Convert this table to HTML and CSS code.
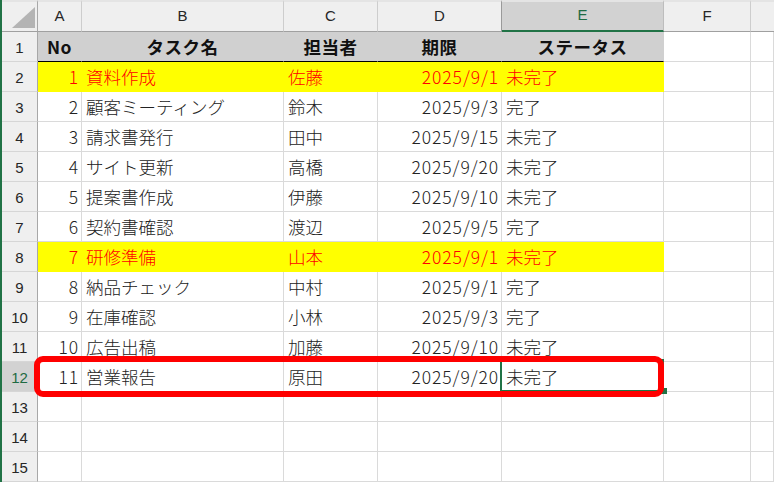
FILE: index.html
```html
<!DOCTYPE html>
<html lang="ja">
<head>
<meta charset="utf-8">
<title>タスク一覧</title>
<link rel="stylesheet" href="styles.css">
</head>
<body>
<div class="app">
  <div class="stripe"></div>
  <div class="sheet">
    <div class="corner"><svg class="tri" width="23" height="21" viewBox="0 0 23 21"><polygon points="0,21 23,21 23,0" fill="#b4b4b4"/></svg></div>
    <div class="ch">A</div><div class="ch">B</div><div class="ch">C</div><div class="ch pre">D</div><div class="ch sel">E</div><div class="ch">F</div><div class="ch last"></div>

    <div class="rh">1</div>
    <div class="c hd">No</div><div class="c hd">タスク名</div><div class="c hd">担当者</div><div class="c hd">期限</div><div class="c hd">ステータス</div><div class="c"></div><div class="c"></div>

    <div class="rh">2</div>
    <div class="c yl num">1</div><div class="c yl">資料作成</div><div class="c yl">佐藤</div><div class="c yl num">2025/9/1</div><div class="c yl">未完了</div><div class="c"></div><div class="c"></div>

    <div class="rh">3</div>
    <div class="c num">2</div><div class="c">顧客ミーティング</div><div class="c">鈴木</div><div class="c num">2025/9/3</div><div class="c">完了</div><div class="c"></div><div class="c"></div>

    <div class="rh">4</div>
    <div class="c num">3</div><div class="c">請求書発行</div><div class="c">田中</div><div class="c num">2025/9/15</div><div class="c">未完了</div><div class="c"></div><div class="c"></div>

    <div class="rh">5</div>
    <div class="c num">4</div><div class="c">サイト更新</div><div class="c">高橋</div><div class="c num">2025/9/20</div><div class="c">未完了</div><div class="c"></div><div class="c"></div>

    <div class="rh">6</div>
    <div class="c num">5</div><div class="c">提案書作成</div><div class="c">伊藤</div><div class="c num">2025/9/10</div><div class="c">未完了</div><div class="c"></div><div class="c"></div>

    <div class="rh">7</div>
    <div class="c num">6</div><div class="c">契約書確認</div><div class="c">渡辺</div><div class="c num">2025/9/5</div><div class="c">完了</div><div class="c"></div><div class="c"></div>

    <div class="rh">8</div>
    <div class="c yl num">7</div><div class="c yl">研修準備</div><div class="c yl">山本</div><div class="c yl num">2025/9/1</div><div class="c yl">未完了</div><div class="c"></div><div class="c"></div>

    <div class="rh">9</div>
    <div class="c num">8</div><div class="c">納品チェック</div><div class="c">中村</div><div class="c num">2025/9/1</div><div class="c">完了</div><div class="c"></div><div class="c"></div>

    <div class="rh">10</div>
    <div class="c num">9</div><div class="c">在庫確認</div><div class="c">小林</div><div class="c num">2025/9/3</div><div class="c">完了</div><div class="c"></div><div class="c"></div>

    <div class="rh">11</div>
    <div class="c num">10</div><div class="c">広告出稿</div><div class="c">加藤</div><div class="c num">2025/9/10</div><div class="c">未完了</div><div class="c"></div><div class="c"></div>

    <div class="rh sel">12</div>
    <div class="c num">11</div><div class="c">営業報告</div><div class="c">原田</div><div class="c num">2025/9/20</div><div class="c">未完了</div><div class="c"></div><div class="c"></div>

    <div class="rh">13</div>
    <div class="c"></div><div class="c"></div><div class="c"></div><div class="c"></div><div class="c"></div><div class="c"></div><div class="c"></div>

    <div class="rh">14</div>
    <div class="c"></div><div class="c"></div><div class="c"></div><div class="c"></div><div class="c"></div><div class="c"></div><div class="c"></div>

    <div class="rh">15</div>
    <div class="c"></div><div class="c"></div><div class="c"></div><div class="c"></div><div class="c"></div><div class="c"></div><div class="c"></div>

    <div class="selection"></div>
    <div class="handle"></div>
    <div class="highlight"></div>
  </div>
</div>
</body>
</html>
```

FILE: styles.css
```css
* { box-sizing: border-box; }
html, body { margin: 0; padding: 0; background: #ffffff; }
body { width: 774px; height: 482px; overflow: hidden; }

.app {
  display: flex;
  height: 482px;
}
.stripe {
  width: 2px;
  flex: none;
  background: #217346;
}
.sheet {
  position: relative;
  flex: 1;
  display: grid;
  grid-template-columns: 36px 44px 202px 94px 124px 162px 87px 1fr;
  grid-template-rows: 32px repeat(15, 30px);
  font-family: "Noto Sans CJK JP", "Noto Sans", sans-serif;
  color: #222222;
}

.corner {
  position: relative;
  background: #efefef;
  border-top: 2px solid #e4e4e4;
  border-right: 1px solid #a8a8a8;
  border-bottom: 1px solid #a0a0a0;
}
.tri { position: absolute; left: 10px; top: 5px; }

.ch {
  display: flex;
  justify-content: center;
  align-items: center;
  padding-bottom: 3px;
  background: #efefef;
  border-top: 2px solid #e4e4e4;
  border-right: 1px solid #cdcdcd;
  border-bottom: 1px solid #a0a0a0;
  font-family: "Liberation Sans", "Noto Sans", sans-serif;
  font-size: 15px;
  color: #262626;
}
.ch.pre { border-right-color: #9a9a9a; }
.ch.sel {
  background: #d2d2d2;
  color: #1e6b43;
  border-bottom: 2px solid #217346;
  border-right-color: #bdbdbd;
}
.ch.last { border-right: none; }

.rh {
  display: flex;
  justify-content: center;
  align-items: center;
  padding-top: 1px;
  background: #efefef;
  border-right: 1px solid #a8a8a8;
  border-bottom: 1px solid #d6d6d6;
  font-family: "Liberation Sans", "Noto Sans", sans-serif;
  font-size: 15px;
  color: #262626;
}
.rh.sel {
  background: #d2d2d2;
  color: #1e6b43;
}

.c {
  display: flex;
  align-items: center;
  padding: 0 4px 0 4px;
  border-right: 1px solid #dadada;
  border-bottom: 1px solid #dadada;
  font-size: 17.5px;
  font-weight: 300;
  white-space: nowrap;
  overflow: hidden;
}
.c.num {
  justify-content: flex-end;
  padding-right: 2px;
  letter-spacing: 0.9px;
}

.c.hd {
  justify-content: center;
  background: #d0d0d0;
  border-right-color: #d0d0d0;
  border-bottom-color: #000000;
  font-weight: bold;
  color: #111111;
  font-size: 17.5px;
  letter-spacing: 0.5px;
}
.c.yl {
  background: #ffff00;
  border-right-color: #ffff00;
  border-bottom-color: #ffff00;
  color: #ff0000;
}

.selection {
  position: absolute;
  left: 498px;
  top: 359px;
  width: 164px;
  height: 33px;
  border: 2px solid #217346;
}
.handle {
  position: absolute;
  left: 659px;
  top: 388px;
  width: 6px;
  height: 6px;
  background: #217346;
}
.highlight {
  position: absolute;
  left: 32px;
  top: 356px;
  width: 630px;
  height: 41px;
  border: 6px solid #ff0000;
  border-radius: 9px;
}
```
